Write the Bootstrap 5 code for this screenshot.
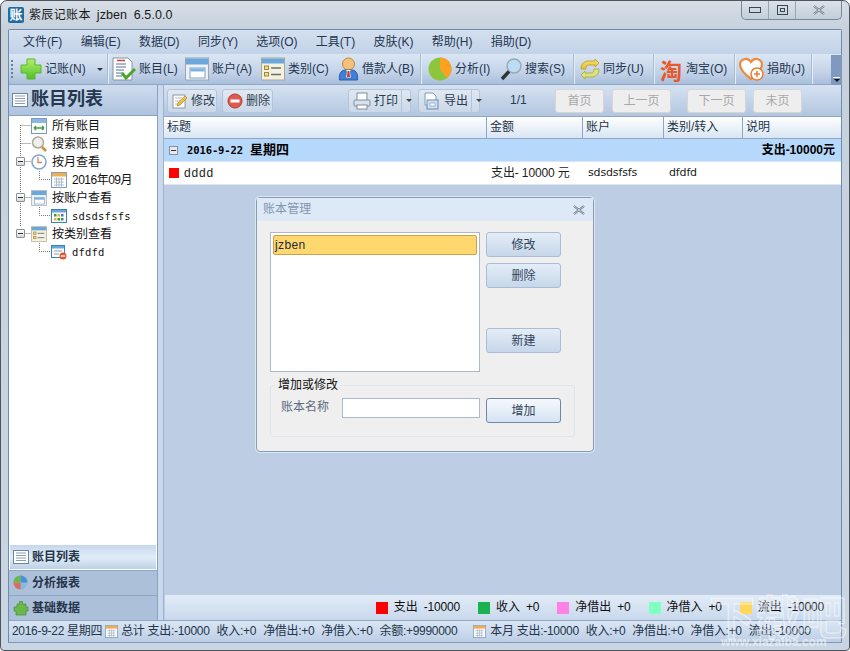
<!DOCTYPE html>
<html lang="zh">
<head>
<meta charset="utf-8">
<title>紫辰记账本</title>
<link rel="stylesheet" href="https://cdn.jsdelivr.net/npm/bootstrap@5.3.0/dist/css/bootstrap.min.css">
<style>
html,body{margin:0;height:651px;overflow:hidden;background:#fff}
body{font:12px/1.2 "Liberation Sans","Noto Sans CJK SC",sans-serif;color:#1e2b3c}
.win{height:651px;width:850px;position:relative;border:1px solid #4d5660;border-radius:7px 7px 4px 4px;background:linear-gradient(#d7dee6,#c6d1dc 28px,#c9d5e2);padding:0 7px 7px;overflow:hidden}
.ttl{height:28px}
.ttl-logo{width:16px;height:16px;background:#1f6ca3;color:#fff;font-size:13px;line-height:16px;text-align:center;border-radius:2px;font-weight:700}
.ttl-t{font-size:12px;margin-left:5px;letter-spacing:.35px;color:#1a1a1a}
.ttl-v{font-size:12.5px;letter-spacing:.1px;margin-left:6px;word-spacing:3px;color:#1a1a1a}
.ctl{position:absolute;right:7px;top:0;height:19px;display:flex;border:1px solid #7a8794;border-top:0;border-radius:0 0 5px 5px;background:linear-gradient(#dbe2e9,#c3ced9)}
.ctl div{display:flex;align-items:center;justify-content:center;border-right:1px solid #98a5b2}
.ctl div:last-child{border:0}
.c1{width:27px}.c2{width:27px}.c3{width:45px}
.panel{border:1px solid #6f8cb0;border-bottom-color:#8299b6;height:614px;background:#bccde4;display:flex;flex-direction:column;border-radius:2px 2px 0 0;width:834px}
.mnu{height:24px;background:linear-gradient(#d4e0ef,#c2d2e8);gap:18.3px;padding-left:14px;color:#243650}
.tlb{height:31px;background:linear-gradient(#dbe6f3,#c3d3e8 60%,#a9bfdb);border-bottom:1px solid #8fa6c6}
.grip{width:10px;align-self:center;height:20px;background:radial-gradient(circle,#6f7f92 1px,transparent 1.2px) 1px 0/4px 4px repeat-y}
.ti{display:flex;align-items:center;gap:3px;padding-left:4px;height:100%;color:#243650;border-right:1px solid #a9bcd6;box-shadow:1px 0 0 #e6eef8}
.ti span{white-space:nowrap}
.ti svg{flex:none}
.tao{font:700 22px/24px "Noto Sans CJK SC",sans-serif;color:#e8582a;width:23px;flex:none}
.t1{width:89px;padding-left:1px}.t2{width:73px}.t3{width:76px}.t4{width:77px}.t5{width:87px}
.t6{width:75px;padding-left:7px}.t7{width:78px}.t8{width:80px;padding-left:6px}.t9{width:81px;padding-left:6px}.t10{width:77px}
.ti.nb{border:0;box-shadow:none}
.tcaret{width:0;height:0;border:3px solid transparent;border-top:3px solid #333;border-bottom:0;margin-left:8px}
.chev{position:absolute;right:7px;top:54px;width:11px;height:30px;background:#7f99bf;display:flex;flex-direction:column;justify-content:flex-end;align-items:center;padding-bottom:3px}
.chev i{display:block;width:7px;height:1px;background:#fff;margin-bottom:1px}
.chev b{display:block;width:0;height:0;border:3px solid transparent;border-top:3px solid #111;border-bottom:0}
.tsp{flex:1}
.mainrow{flex:1;min-height:0;display:flex;background:#bccde4}
.side{width:149px;border-right:1px solid #8aa2c2;display:flex;flex-direction:column}
.side-h{height:31px;background:linear-gradient(#cfdcee,#aec3de);border-bottom:1px solid #8aa2c2;font-size:18px;font-weight:700;color:#24384f;gap:3px;padding-left:3px}
.tree{flex:1;background:#fff;position:relative;padding-top:1px;color:#111}
.tl{position:absolute;left:0;top:0}
.tn{height:18px;display:flex;align-items:center;gap:5px;position:relative}
.l0{padding-left:22px}.l1{padding-left:42px}
.tdt{letter-spacing:-.5px}
.mono{font:10.5px "DejaVu Sans Mono","Liberation Mono",monospace;letter-spacing:.2px}
.exp{position:absolute;left:7px;top:4px;width:9px;height:9px;border:1px solid #8a8f98;background:linear-gradient(#fff,#d5dae0);border-radius:1px}
.exp::after{content:"";position:absolute;left:1px;right:1px;top:3px;height:1px;background:#333}
.nv{height:25px;font-weight:700;gap:3px;padding-left:4px;color:#25354a;background:#adc0da;border-top:1px solid #8fa6c6}
.nv.on{background:linear-gradient(#c5d6ec,#e2edf8 50%,#bcd0e8);border:1px solid #fff;height:26px;padding-left:3px}
.split{width:6px;background:#cbd9ec;border-right:1px solid #9db2cf}
.mn{flex:1;min-width:0;display:flex;flex-direction:column;position:relative}
.acts{height:31px;background:linear-gradient(#d6e2f1,#b2c6e0);padding-left:3px}
.bt{height:24px;font-size:12px;padding:0 6px 0 4px;border:1px solid #b4c5da;border-radius:3px;color:#2b3b50;display:flex;align-items:center;gap:3px;background:linear-gradient(#e0e8f2,#cbd8e8);line-height:1;white-space:nowrap}
.bt svg{flex:none}
.b1{width:50px;margin-right:5px}.b2{width:51px;margin-right:75px}
.b3{width:63px;padding-right:0;margin-right:7px}.b4{width:62px;padding-right:0;margin-right:30px}
.dd{margin-left:auto;width:14px;flex:none;height:100%;border-left:1px solid #b4c5da;display:flex;align-items:center;justify-content:center}
.dd i{width:0;height:0;border:3px solid transparent;border-top:3px solid #444;border-bottom:0}
.pg{width:18px;margin-right:27px;color:#2b3b50;white-space:nowrap}
.dis{height:24px;font-size:12px;padding:0;border:1px solid #d6d6d6;background:#eeeeee;color:#a8a8a8;border-radius:3px;opacity:1}
.dis:disabled{background:#eee;border-color:#d6d6d6;color:#a8a8a8;opacity:1}
.d1{width:49px;margin-right:8px}.d2{width:59px;margin-right:16px}.d3{width:59px;margin-right:7px}.d4{width:49px}
.gt{display:flex;height:23px;background:linear-gradient(#fff,#d9e5f3);border-top:1px solid #8fa6c6;border-bottom:1px solid #8fa6c6;color:#24364b;flex:none}
.cw{padding-left:3px;border-right:1px solid #8fa6c6;line-height:21px;flex:none;white-space:nowrap}
.k1{width:323px}.k2{width:96px}.k3{width:81px}.k4{width:79px}.k5{flex:1;border:0}
.grp{height:23px;background:#b5d8fb;border-bottom:1px solid #d6e6f8;font-weight:700;color:#000;padding:0 6px 0 5px;flex:none}
.grp .g0{width:9px;height:9px;border:1px solid #8a8f98;background:#e6eaf0;margin-right:9px;position:relative}
.grp .g0::after{content:"";position:absolute;left:1px;right:1px;top:3px;height:1px;background:#333}
.gd{font:700 10.5px "DejaVu Sans Mono","Liberation Mono",monospace;letter-spacing:-.1px;margin-right:7px}
.gs{font-size:13px}
.dr{display:flex;height:23px;background:#fff;color:#222;border-bottom:1px solid #dfe6f0;flex:none}
.dr .cw{border:0;line-height:22px}
.sq{width:10px;height:10px;background:#f00;display:inline-block;margin:0 5px 0 2px}
.dr .k1{display:flex;align-items:center;letter-spacing:.8px}
.amt{padding-left:4px;letter-spacing:-.12px}
.dtx{font-size:11px;padding-left:5px;font-family:"DejaVu Sans",sans-serif;letter-spacing:-.15px}
.fill{flex:1}
.lgd{height:25px;background:linear-gradient(#e2ecf7,#c8d8ec);margin-left:1px;color:#111;padding-right:17px;justify-content:flex-end}
.lgs{width:12px;height:12px;margin-right:6px}
.lg-t{margin-right:6px}.lg-n{letter-spacing:-.2px}.lg-g{margin-right:18px}
.cr{background:#f00}.cg{background:#1cb14f}.cp{background:#ff80e6}.cm{background:#80ffc0}.cy{background:#ffd75a}
.sts{height:22px;background:linear-gradient(#dbe6f3,#bccee5);border-top:1px solid #8fa6c6;gap:7px;padding-left:3px;color:#23354c;white-space:nowrap;letter-spacing:-.3px}
.sic{flex:none}
.sic1{margin:0 -4px 0 -4px}
.sic2{margin:0 -3px 0 9px}
.dlg{position:absolute;left:92px;top:112px;width:338px;height:255px;background:#efefef;border:1px solid #8a9bb0;border-radius:4px;box-shadow:0 0 0 1px #dbe6f3}
.dlg-h{height:23px;background:#dde9f6;color:#8296b2;padding-left:6px;letter-spacing:.1px}
.dlg-x{margin-left:auto;margin-right:8px}
.dlg-b{padding:11px 0 0 13px}
.lb{width:210px;height:140px;border:1px solid #abb8c8;background:#fff;padding:2px}
.lb .list-group-item{padding:2px 2px 2px 1px;height:20px;border:1px solid #c9a24a;border-radius:2px;background:#ffd76f;color:#1c2b3c;font-size:12px;line-height:14px;letter-spacing:.4px}
.dc{margin-left:6px;width:75px;height:140px}
.dbtn{width:75px;height:25px;padding:0;font-size:12px;border:1px solid #a9bdd6;border-radius:3px;background:linear-gradient(#e4edf7,#c6d7ea);color:#33445a;line-height:1}
.db2{margin-top:6px}.db3{margin-top:40px}
.fs{margin:13px 0 0;width:305px;height:52px;border:1px solid #dfe5ec;border-radius:3px;position:relative;padding:12px 0 0 10px;background:#efefef}
.fs-l{position:absolute;left:5px;top:-9px;background:#efefef;padding:0 2px;color:#111;float:none;width:auto;margin:0;font-size:12px;line-height:16px}
.fs-n{color:#5d6b7e;width:61px;margin-top:2px}
.ipt{width:138px;height:20px;border:1px solid #abb8c8;border-radius:0;padding:0;background:#fff;min-height:0}
.dbtn2{margin-left:6px;background:linear-gradient(#f6f9fd,#d5e3f3);border-color:#7187a5;color:#33445a}
.wm{position:absolute;right:0;bottom:0;width:140px;height:60px;pointer-events:none}
.wm1{font:700 46px/48px "Noto Sans CJK SC",sans-serif;white-space:nowrap;-webkit-text-stroke:1px rgba(255,255,255,.6);color:rgba(255,255,255,.12)}
.wm2{position:absolute;left:12px;bottom:1px;font-size:12px;color:rgba(255,255,255,.55);white-space:nowrap;font-weight:700}
</style>
</head>
<body>
<svg width="0" height="0" class="position-absolute">
<defs>
<linearGradient id="gp" x1="0" y1="0" x2="0" y2="1"><stop offset="0" stop-color="#b4ef6a"/><stop offset="1" stop-color="#4fc02a"/></linearGradient>
<linearGradient id="gs" x1="0" y1="0" x2="0" y2="1"><stop offset="0" stop-color="#f8e070"/><stop offset="1" stop-color="#e8c030"/></linearGradient>
<symbol id="list" viewBox="0 0 16 14"><rect x=".5" y=".5" width="15" height="13" fill="#fff" stroke="#6c86a8"/><path d="M3 3h10M3 5.500h10M3 8h10M3 10.500h10" stroke="#8a9cb4"/></symbol>
<symbol id="win" viewBox="0 0 24 24"><rect x=".5" y="1" width="23" height="22" fill="#eef1f4" stroke="#9aa6b4"/><rect x="1" y="1.500" width="22" height="6" fill="#6aa7dc"/><rect x="5" y="11" width="15" height="10" fill="#fff" stroke="#7da3c9"/><rect x="5.500" y="11.500" width="14" height="3" fill="#7fb4e2"/></symbol>
<symbol id="cat" viewBox="0 0 24 24"><rect x=".5" y="1" width="23" height="22" fill="#f6f0dc" stroke="#a8a898"/><rect x="1" y="1.500" width="22" height="5" fill="#6aa7dc"/><rect x="3.500" y="9" width="4" height="3.500" fill="#f0d890" stroke="#a08a40"/><rect x="3.500" y="15.500" width="4" height="3.500" fill="#f0d890" stroke="#a08a40"/><path d="M10 11h10M10 17.500h10" stroke="#5f6f80" stroke-width="1.300"/></symbol>
<symbol id="plus" viewBox="0 0 22 22"><path d="M7 1h8v6h6v8h-6v6H7v-6H1V7h6z" fill="url(#gp)" stroke="#5cb52a" stroke-linejoin="round"/></symbol>
<symbol id="doc" viewBox="0 0 24 24"><path d="M1 1h15l4 4v18H1z" fill="#fff" stroke="#8792a0"/><path d="M5 3.500h8" stroke="#d04040" stroke-width="1.500"/><path d="M4 7h10M4 10h10M4 13h8M4 16h7M4 19h6" stroke="#5570a0"/><path d="M10 16l4 5 9-9" fill="none" stroke="#4aa52a" stroke-width="3"/></symbol>
<symbol id="user" viewBox="0 0 20 24"><circle cx="10" cy="7" r="6" fill="#f4c07a" stroke="#b98a3e"/><path d="M1 23c-1-8 3-10 6-10h6c3 0 7 2 6 10z" fill="#3f7fd8" stroke="#2a5ea8"/><path d="M7.500 13h5l-1 1.500 .8 6H7.700l.8-6z" fill="#fff"/><path d="M9 14h2l.5 6h-3z" fill="#d83a2a"/></symbol>
<symbol id="pie" viewBox="0 0 24 24"><circle cx="12" cy="12" r="11.500" fill="#8cc63f"/><path d="M12 12V.5A11.500 11.500 0 0 1 19 21z" fill="#ffa020"/></symbol>
<symbol id="mag" viewBox="0 0 22 24"><circle cx="14" cy="9" r="7" fill="#bcdcf4" stroke="#9aa8b6" stroke-width="1.500"/><path d="M9 14.500l-7 7.500" stroke="#333" stroke-width="3.500"/></symbol>
<symbol id="sync" viewBox="0 0 20 20"><path d="M1 10C1 4 5 2 9 2h6V0l4 4-4 4V6H9C7 6 6 7 6 10z" fill="url(#gs)" stroke="#b89a20" stroke-width=".8"/><path d="M19 10c0 6-4 8-8 8H5v2l-4-4 4-4v2h6c2 0 3-1 3-4z" fill="#dbe27a" stroke="#a8a830" stroke-width=".8"/></symbol>
<symbol id="heart" viewBox="0 0 25 24"><path d="M12 22C4 16 1 12 1 7.500 1 3 8-1 12 5c4-6 11-2 11 2.500 0 4.500-3 8.500-11 14.500z" fill="#fff" stroke="#ee8a3a" stroke-width="2.200"/><circle cx="18" cy="17" r="6" fill="#fff" stroke="#ee7a30" stroke-width="1.500"/><path d="M18 14v6M15 17h6" stroke="#ee7a30" stroke-width="1.500"/></symbol>
<symbol id="clock" viewBox="0 0 16 16"><circle cx="8" cy="8" r="7" fill="#fff" stroke="#7fa6cc" stroke-width="1.600"/><path d="M7 3v5.500h4" fill="none" stroke="#d88060" stroke-width="1.300"/></symbol>
<symbol id="cal" viewBox="0 0 16 16"><rect x=".5" y=".5" width="15" height="15" fill="#fff" stroke="#7f9dc0"/><rect x="1" y="1" width="14" height="3.500" fill="#f0ae50"/><path d="M3 7h10M3 10h10M3 13h10M5.500 5.500v9M8 5.500v9M10.500 5.500v9" stroke="#9fb0c4" stroke-width=".8"/></symbol>
<symbol id="grid" viewBox="0 0 16 14"><rect x=".5" y=".5" width="15" height="13" fill="#fff" stroke="#3f7fb8"/><rect x="1" y="1" width="14" height="2.500" fill="#6aa7dc"/><rect x="3" y="5" width="2.500" height="2.500" fill="#3a9a3a"/><rect x="6.500" y="5" width="2.500" height="2.500" fill="#e0b030"/><rect x="10" y="5" width="2.500" height="2.500" fill="#3a7ac8"/><rect x="3" y="9" width="2.500" height="2.500" fill="#e0b030"/><rect x="6.500" y="9" width="2.500" height="2.500" fill="#3a9a3a"/><rect x="10" y="9" width="2.500" height="2.500" fill="#3a9a3a"/></symbol>
<symbol id="edit" viewBox="0 0 16 16"><rect x="1" y="2" width="12" height="13" fill="#fff" stroke="#8a9aac"/><path d="M3 5h7M3 8h5M3 11h3" stroke="#b0bcc8"/><path d="M5 13l1-3 7-7 2 2-7 7z" fill="#f0c040" stroke="#b08820" stroke-width=".7"/></symbol>
<symbol id="del" viewBox="0 0 16 16"><circle cx="8" cy="8" r="7" fill="#e05a50" stroke="#b03a30"/><rect x="3.500" y="6.500" width="9" height="3" fill="#fff"/></symbol>
<symbol id="print" viewBox="0 0 18 18"><rect x="4" y="1" width="10" height="8" fill="#fff" stroke="#7d8ea4"/><rect x="1" y="8" width="16" height="6" rx="1" fill="#d8e0ea" stroke="#7d8ea4"/><rect x="4" y="13" width="10" height="4" fill="#fff" stroke="#7d8ea4"/></symbol>
<symbol id="exp" viewBox="0 0 18 18"><path d="M2 1h8l3 3v9H2z" fill="#fff" stroke="#7d9cc0"/><rect x="4" y="8" width="11" height="9" fill="#cfe0f4" stroke="#6f8cb0"/><rect x="7" y="11" width="5" height="3" fill="#fff" stroke="#6f8cb0" stroke-width=".6"/></symbol>
<symbol id="leaf" viewBox="0 0 16 16"><circle cx="7.500" cy="7.500" r="7" fill="#8ab8d8"/><path d="M7.500 7.500V.5a7 7 0 0 1 7 7z" fill="#4a90d8"/><path d="M7.500 7.500H.5a7 7 0 0 0 7 7z" fill="#e06a60"/><path d="M.5 7.500a7 7 0 0 1 7-7v7z" fill="#6ab84a"/></symbol>
<symbol id="puz" viewBox="0 0 16 16"><path d="M1 7h3V4h2.500V1.500h3V4H13v3h2v4h-2v4H3v-4H1z" fill="#6ab84a" stroke="#4a8a30" stroke-width=".7"/></symbol>
<symbol id="x" viewBox="0 0 12 10"><path d="M1 1l10 8M11 1L1 9" stroke="#5f6c7a" stroke-width="2.200"/><path d="M1 1l10 8M11 1L1 9" stroke="#fff" stroke-width=".7"/></symbol>
</defs>
</svg>
<div class="win">
  <div class="ttl d-flex align-items-center"><div class="ttl-logo">账</div><div class="ttl-t">紫辰记账本</div><div class="ttl-v">jzben 6.5.0.0</div></div>
  <div class="ctl">
    <div class="c1"><svg width="12" height="6"><rect x=".5" y=".5" width="11" height="5" fill="none" stroke="#3c4650"/></svg></div>
    <div class="c2"><svg width="11" height="10"><rect x=".5" y=".5" width="10" height="9" fill="none" stroke="#3c4650"/><rect x="3.500" y="3.500" width="4" height="3" fill="none" stroke="#3c4650"/></svg></div>
    <div class="c3"><svg width="12" height="10"><use href="#x"/></svg></div>
  </div>
  <div class="panel">
    <nav class="mnu d-flex align-items-center">
      <span>文件(F)</span><span>编辑(E)</span><span>数据(D)</span><span>同步(Y)</span><span>选项(O)</span><span>工具(T)</span><span>皮肤(K)</span><span>帮助(H)</span><span>捐助(D)</span>
    </nav>
    <div class="tlb d-flex align-items-center">
      <div class="grip"></div>
      <div class="ti t1"><svg width="22" height="22"><use href="#plus"/></svg><span>记账(N)</span><i class="tcaret"></i></div>
      <div class="ti t2 nb"><svg width="24" height="24"><use href="#doc"/></svg><span>账目(L)</span></div>
      <div class="ti t3 nb"><svg width="24" height="24"><use href="#win"/></svg><span>账户(A)</span></div>
      <div class="ti t4 nb"><svg width="24" height="24"><use href="#cat"/></svg><span>类别(C)</span></div>
      <div class="ti t5"><svg width="21" height="24"><use href="#user"/></svg><span>借款人(B)</span></div>
      <div class="ti t6 nb"><svg width="24" height="24"><use href="#pie"/></svg><span>分析(I)</span></div>
      <div class="ti t7"><svg width="22" height="24"><use href="#mag"/></svg><span>搜索(S)</span></div>
      <div class="ti t8"><svg width="20" height="20"><use href="#sync"/></svg><span>同步(U)</span></div>
      <div class="ti t9"><b class="tao">淘</b><span>淘宝(O)</span></div>
      <div class="ti t10"><svg width="25" height="24"><use href="#heart"/></svg><span>捐助(J)</span></div>
      <div class="tsp"></div>
    </div>
    <div class="mainrow">
      <aside class="side">
        <div class="side-h d-flex align-items-center"><svg width="16" height="14"><use href="#list"/></svg><span>账目列表</span></div>
        <div class="tree">
          <svg class="tl" width="60" height="150"><g stroke="#777" stroke-dasharray="1 1" fill="none"><path d="M11.500 9v101M11.500 9.500H22M11.500 27.500H22M11.500 45.500H22M11.500 81.500H22M11.500 117.500H22M30.500 55v8.500H42M30.500 91v8.500H42M30.500 127v8.500H42"/></g></svg>
          <div class="tn l0"><svg width="16" height="16"><rect x=".5" y=".5" width="15" height="15" fill="#fff" stroke="#7a98b8"/><rect x="1" y="1" width="14" height="4" fill="#8ab8e0"/><path d="M3 10h10M3 10l2-2M3 10l2 2M13 10l-2-2M13 10l-2 2" stroke="#3aa53a" stroke-width="1.500" fill="none"/></svg><span>所有账目</span></div>
          <div class="tn l0"><svg width="16" height="16" viewBox="0 0 16 16"><circle cx="7" cy="6.500" r="5.500" fill="#eee" stroke="#b0a898" stroke-width="1.500"/><path d="M11 11l4 4" stroke="#c8903a" stroke-width="2.500"/></svg><span>搜索账目</span></div>
          <div class="tn l0"><i class="exp"></i><svg width="16" height="16"><use href="#clock"/></svg><span>按月查看</span></div>
          <div class="tn l1"><svg width="16" height="16"><use href="#cal"/></svg><span class="tdt">2016年09月</span></div>
          <div class="tn l0"><i class="exp"></i><svg width="16" height="16"><use href="#win"/></svg><span>按账户查看</span></div>
          <div class="tn l1"><svg width="16" height="14"><use href="#grid"/></svg><span class="mono">sdsdsfsfs</span></div>
          <div class="tn l0"><i class="exp"></i><svg width="16" height="16"><use href="#cat"/></svg><span>按类别查看</span></div>
          <div class="tn l1"><svg width="16" height="15" viewBox="0 0 16 15"><rect x=".5" y=".5" width="13" height="12" fill="#fff" stroke="#3f7fb8"/><rect x="1" y="1" width="12" height="2.500" fill="#6aa7dc"/><path d="M3 6h8M3 9h5" stroke="#8a9aac"/><circle cx="12" cy="11" r="3.500" fill="#e0542a"/><rect x="9.800" y="10.300" width="4.400" height="1.400" fill="#fff"/></svg><span class="mono">dfdfd</span></div>
        </div>
        <div class="nv on d-flex align-items-center"><svg width="16" height="14"><use href="#list"/></svg><span>账目列表</span></div>
        <div class="nv d-flex align-items-center"><svg width="16" height="16"><use href="#leaf"/></svg><span>分析报表</span></div>
        <div class="nv d-flex align-items-center"><svg width="16" height="16"><use href="#puz"/></svg><span>基础数据</span></div>
      </aside>
      <div class="split"></div>
      <main class="mn">
        <div class="acts d-flex align-items-center">
          <button type="button" class="btn bt b1"><svg width="16" height="16"><use href="#edit"/></svg>修改</button>
          <button type="button" class="btn bt b2"><svg width="16" height="16"><use href="#del"/></svg>删除</button>
          <button type="button" class="btn bt b3"><svg width="18" height="18"><use href="#print"/></svg>打印<span class="dd"><i></i></span></button>
          <button type="button" class="btn bt b4"><svg width="18" height="18"><use href="#exp"/></svg>导出<span class="dd"><i></i></span></button>
          <span class="pg">1/1</span>
          <button type="button" class="btn dis d1" disabled>首页</button>
          <button type="button" class="btn dis d2" disabled>上一页</button>
          <button type="button" class="btn dis d3" disabled>下一页</button>
          <button type="button" class="btn dis d4" disabled>未页</button>
        </div>
        <div class="gt"><div class="cw k1">标题</div><div class="cw k2">金额</div><div class="cw k3">账户</div><div class="cw k4">类别/转入</div><div class="cw k5">说明</div></div>
        <div class="grp d-flex align-items-center"><span class="g0"></span><span class="gd">2016-9-22</span><span class="gs">星期四</span><span class="ms-auto">支出-10000元</span></div>
        <div class="dr"><div class="cw k1"><i class="sq"></i>dddd</div><div class="cw k2 amt">支出- 10000 元</div><div class="cw k3 dtx">sdsdsfsfs</div><div class="cw k4 dtx">dfdfd</div></div>
        <div class="fill"></div>
        <div class="lgd d-flex align-items-center">
          <i class="lgs cr"></i><span class="lg-t">支出</span><span class="lg-g lg-n">-10000</span>
          <i class="lgs cg"></i><span class="lg-t">收入</span><span class="lg-g lg-n">+0</span>
          <i class="lgs cp"></i><span class="lg-t">净借出</span><span class="lg-g lg-n">+0</span>
          <i class="lgs cm"></i><span class="lg-t">净借入</span><span class="lg-g lg-n">+0</span>
          <i class="lgs cy"></i><span class="lg-t">流出</span><span class="lg-n">-10000</span>
        </div>
        <section class="dlg">
          <div class="dlg-h d-flex align-items-center"><span>账本管理</span><svg class="dlg-x" width="12" height="10"><use href="#x"/></svg></div>
          <div class="dlg-b">
            <div class="d-flex">
              <div class="lb"><ul class="list-group"><li class="list-group-item">jzben</li></ul></div>
              <div class="dc">
                <button type="button" class="btn dbtn d-block">修改</button>
                <button type="button" class="btn dbtn d-block db2">删除</button>
                <button type="button" class="btn dbtn d-block db3">新建</button>
              </div>
            </div>
            <fieldset class="fs d-flex align-items-start">
              <legend class="fs-l">增加或修改</legend>
              <span class="fs-n">账本名称</span><input class="form-control ipt" type="text" aria-label="账本名称"><button type="button" class="btn dbtn dbtn2">增加</button>
            </fieldset>
          </div>
        </section>
      </main>
    </div>
    <footer class="sts d-flex align-items-center">
      <span>2016-9-22 星期四</span><svg width="13" height="13" class="sic sic1"><use href="#cal"/></svg><span>总计 支出:-10000</span><span>收入:+0</span><span>净借出:+0</span><span>净借入:+0</span><span>余额:+9990000</span><svg width="13" height="13" class="sic sic2"><use href="#cal"/></svg><span>本月 支出:-10000</span><span>收入:+0</span><span>净借出:+0</span><span>净借入:+0</span><span>流出:-10000</span>
    </footer>
  </div>
  <div class="chev"><i></i><b></b></div>
  <div class="wm"><div class="wm1">下载吧</div><div class="wm2">www.xiazaiba.com</div></div>
</div>
<script src="https://cdn.jsdelivr.net/npm/bootstrap@5.3.0/dist/js/bootstrap.bundle.min.js"></script>
</body>
</html>
